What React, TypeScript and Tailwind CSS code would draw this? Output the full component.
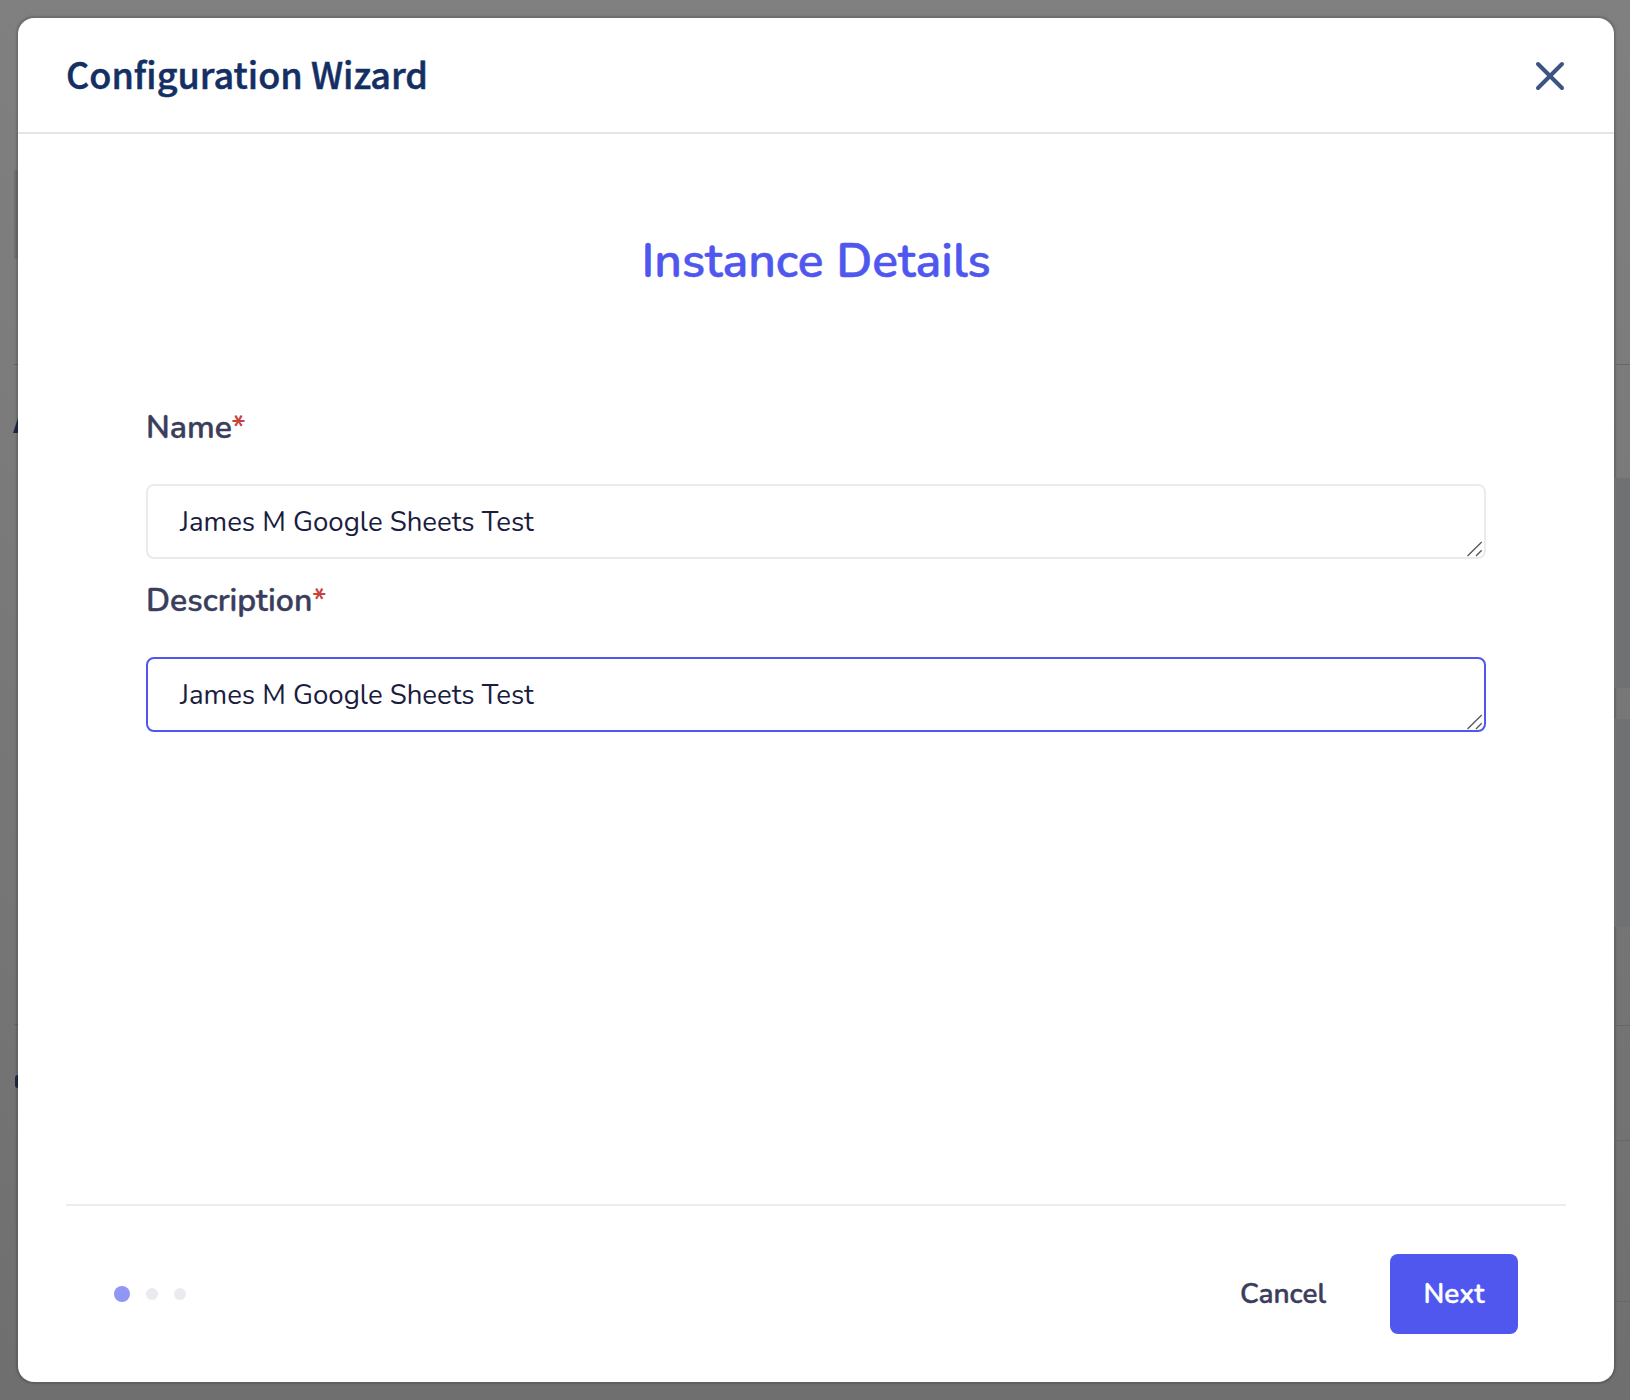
import { X } from "lucide-react";

const fields = [
  { label: "Name", focused: false },
  { label: "Description", focused: true },
];

const App = () => {
  return (
    <div className="w-[1630px] h-[1400px] flex bg-gradient-to-b from-[#808080] to-[#6f6f6f] font-['Nunito','Lato',sans-serif]">
      {/* what is left visible of the page behind the dialog */}
      <div className="w-[18px] shrink-0 flex flex-col items-end">
        <div className="h-[170px] shrink-0" />
        <div className="h-[89px] w-[4px] shrink-0 bg-[#6f7173]" />
        <div className="h-[105px] shrink-0" />
        <div className="h-px w-[4px] shrink-0 bg-[#666666]" />
        <div className="h-[53px] shrink-0" />
        <svg className="w-[5px] h-[15px] shrink-0" viewBox="0 0 5 15">
          <path d="M5 0 L0 15 H5 Z" fill="#1d2a44" />
        </svg>
        <div className="h-[591px] shrink-0" />
        <div className="h-px w-[4px] shrink-0 bg-[#666666]" />
        <div className="h-[50px] shrink-0" />
        <div className="h-[13px] w-[3px] shrink-0 rounded-l-full bg-[#1d2a44]" />
        <div className="h-[48px] shrink-0" />
        <div className="h-[156px] w-[4px] shrink-0 bg-[#6f7173]" />
      </div>

      <div className="w-[1596px] h-[1364px] my-[18px] shrink-0 bg-white rounded-[16px] flex flex-col shadow-[0_0_2px_2px_rgba(0,0,0,0.16)]">
        {/* Header */}
        <div className="h-[116px] shrink-0 border-b-2 border-[#e5e5e5] pl-[48px] pr-[40px] flex items-center justify-between">
          <h1 className="mb-[4px] font-['Noto_Sans_CJK_SC',sans-serif] text-[36px] font-medium [-webkit-text-stroke:0.5px] text-[#142f63]">
            Configuration Wizard
          </h1>
          <button type="button" aria-label="Close" className="mt-[2px] text-[#3b5482]">
            <X className="w-[48px] h-[48px]" strokeWidth={2} />
          </button>
        </div>

        {/* Step body */}
        <div className="flex-1 px-[128px]">
          <h2 className="mt-[94px] text-center text-[48px] leading-[66px] font-semibold [-webkit-text-stroke:0.5px] text-[#4f57ee]">
            Instance Details
          </h2>
          <div className="mt-[112px] flex flex-col gap-[20px]">
            {fields.map((field) => (
              <div key={field.label}>
                <label className="block text-[32px] leading-[44px] font-semibold [-webkit-text-stroke:0.4px] text-[#3a3d5c]">
                  {field.label}
                  <span className="text-[#c9403c] [-webkit-text-stroke:0px]">*</span>
                </label>
                <div className="relative mt-[34px]">
                  <textarea
                    defaultValue="James M Google Sheets Test"
                    className={
                      field.focused
                        ? "block w-full h-[75px] resize-none rounded-[8px] border-2 border-[#4f57ee] pl-[32px] pr-[31px] py-[20px] text-[27.6px] leading-[32px] text-[#1b1d40] outline-none"
                        : "block w-full h-[75px] resize-none rounded-[8px] border-2 border-[#ebebef] pl-[32px] pr-[31px] py-[20px] text-[27.6px] leading-[32px] text-[#1b1d40] outline-none"
                    }
                  />
                  <svg className="absolute right-[3px] bottom-[2px] w-[16px] h-[16px]" viewBox="0 0 16 16" fill="none" stroke="#555555" strokeWidth="1.3">
                    <path d="M0.5 15 L14.7 1" />
                    <path d="M9 15 L14.7 9.3" />
                  </svg>
                </div>
              </div>
            ))}
          </div>
        </div>

        {/* Footer */}
        <div className="mx-[48px] h-[178px] shrink-0 border-t-2 border-[#ededf1] pl-[48px] pr-[48px] flex items-center justify-between">
          <div className="flex items-center">
            <span className="w-[16px] h-[16px] rounded-full bg-[#9096f4]" />
            <span className="ml-[16px] w-[12px] h-[12px] rounded-full bg-[#ebebef]" />
            <span className="ml-[16px] w-[12px] h-[12px] rounded-full bg-[#ebebef]" />
          </div>
          <div className="flex items-center">
            <button type="button" className="text-[28px] font-semibold [-webkit-text-stroke:0.4px] text-[#3a3d5c]">
              Cancel
            </button>
            <button
              type="button"
              className="ml-[64px] w-[128px] h-[80px] rounded-[8px] bg-[#4f57ee] text-[28px] font-semibold [-webkit-text-stroke:0.4px] text-white"
            >
              Next
            </button>
          </div>
        </div>
      </div>

      <div className="w-[16px] shrink-0 flex flex-col">
        <div className="h-[364px] shrink-0" />
        <div className="h-px shrink-0 bg-[#666666]" />
        <div className="h-[113px] shrink-0" />
        <div className="h-[210px] shrink-0 bg-[#6f7173]" />
        <div className="h-[31px] shrink-0" />
        <div className="h-[208px] shrink-0 bg-[#6f7173]" />
        <div className="h-[98px] shrink-0" />
        <div className="h-px shrink-0 bg-[#666666]" />
        <div className="h-[114px] shrink-0" />
        <div className="h-px shrink-0 bg-[#666666]" />
        <div className="h-[160px] shrink-0" />
        <div className="h-px shrink-0 bg-[#666666]" />
      </div>
    </div>
  );
};

export default App;
